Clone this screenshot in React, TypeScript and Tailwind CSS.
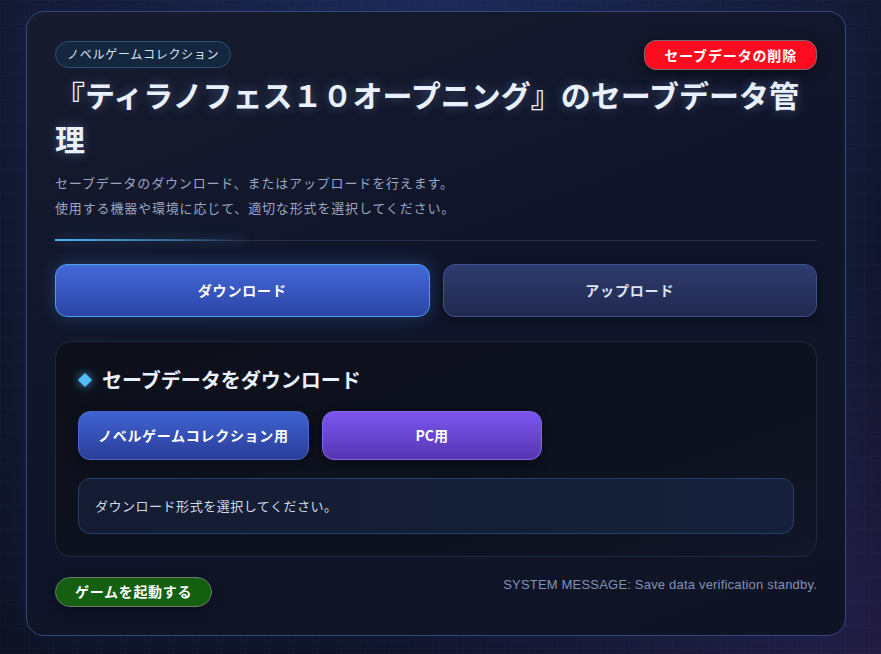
import React, { useState } from "react";

const jp = { fontFamily: '"Noto Sans CJK JP", "Noto Sans", sans-serif' };

export default function App() {
  const [tab, setTab] = useState<"download" | "upload">("download");

  return (
    <div
      className="relative min-h-[654px] w-full overflow-hidden bg-[#111629] pl-[26px] pt-[11px] pb-[19px]"
      style={jp}
    >
      {/* backdrop glow + grid */}
      <div className="pointer-events-none absolute inset-0 bg-[radial-gradient(ellipse_at_50%_-10%,#1e2a58_0%,transparent_55%),radial-gradient(ellipse_at_105%_100%,#241d45_0%,transparent_45%),linear-gradient(180deg,#141a33_0%,#0e1222_100%)]" />
      <div className="pointer-events-none absolute inset-0 bg-[linear-gradient(rgba(120,150,220,0.035)_1px,transparent_1px),linear-gradient(90deg,rgba(120,150,220,0.035)_1px,transparent_1px)] bg-[size:24px_24px]" />

      <div className="relative w-[820px] rounded-[18px] border border-[#34497a] bg-[linear-gradient(160deg,#171b2d_0%,#10152a_45%,#0f1425_100%)] px-[28px] pt-[28px] pb-[28px] shadow-[0_0_40px_rgba(30,60,140,0.25)]">
        {/* header */}
        <div className="relative">
          <span className="inline-flex h-[27px] items-center rounded-full border border-[#2c5278] bg-[#14273f] px-[11px] text-[12px] tracking-[0.06em] text-[#dbe6f5]">
            ノベルゲームコレクション
          </span>
          <button className="absolute right-0 top-0 flex h-[30px] items-center rounded-[12px] border border-[#7a6a6e] bg-[#ff0b1f] px-[19px] text-[14px] font-bold tracking-[0.06em] text-white shadow-[0_4px_14px_rgba(0,0,0,0.45)]">
            セーブデータの削除
          </button>
          <h1 className="mt-[4px] text-[30px] font-bold leading-[44px] text-[#e9f1ff] [text-shadow:0_0_12px_rgba(150,190,255,0.35)]">
            『ティラノフェス１０オープニング』のセーブデータ管理
          </h1>
          <p className="mt-[10px] text-[13px] leading-[25px] tracking-[0.065em] text-[#9aa6c4]">
            セーブデータのダウンロード、またはアップロードを行えます。
            <br />
            使用する機器や環境に応じて、適切な形式を選択してください。
          </p>
        </div>

        {/* divider */}
        <div className="relative mt-[19px] h-[2px]">
          <div className="absolute inset-x-0 top-[1px] h-px bg-[#27304a]" />
          <div className="absolute left-0 top-0 h-[2px] w-[190px] bg-[linear-gradient(90deg,#4fb4f4_0%,rgba(79,180,244,0.5)_60%,transparent_100%)] shadow-[0_0_12px_rgba(79,180,244,0.45)]" />
        </div>

        {/* tabs */}
        <div className="mt-[23px] grid grid-cols-2 gap-[13px]">
          <button
            onClick={() => setTab("download")}
            className={`h-[53px] rounded-[12px] border text-[14px] font-bold tracking-[0.06em] ${
              tab === "download"
                ? "border-[#4aa2ea] bg-[linear-gradient(180deg,#4369d8_0%,#2c44a6_100%)] text-white shadow-[0_0_18px_rgba(70,140,240,0.3)]"
                : "border-[#3d5190] bg-[linear-gradient(180deg,#2e3b6e_0%,#212950_100%)] text-[#dde5f7] shadow-[0_4px_12px_rgba(0,0,0,0.35)]"
            }`}
          >
            ダウンロード
          </button>
          <button
            onClick={() => setTab("upload")}
            className={`h-[53px] rounded-[12px] border text-[14px] font-bold tracking-[0.06em] ${
              tab === "upload"
                ? "border-[#4aa2ea] bg-[linear-gradient(180deg,#4369d8_0%,#2c44a6_100%)] text-white shadow-[0_0_18px_rgba(70,140,240,0.3)]"
                : "border-[#3d5190] bg-[linear-gradient(180deg,#2e3b6e_0%,#212950_100%)] text-[#dde5f7] shadow-[0_4px_12px_rgba(0,0,0,0.35)]"
            }`}
          >
            アップロード
          </button>
        </div>

        {/* panel */}
        <div className="mt-[24px] rounded-[16px] border border-[#1e2942] bg-[linear-gradient(160deg,#0d101b_0%,#0e121f_70%,#121729_100%)] px-[22px] pt-[24px] pb-[22px]">
          <div className="flex items-center gap-[12px]">
            <span className="ml-[2px] h-[10px] w-[10px] rotate-45 bg-[#52bdf9] shadow-[0_0_8px_rgba(82,189,249,0.8)]" />
            <h2 className="text-[20px] font-bold leading-[28px] text-[#e9f1ff]">
              セーブデータをダウンロード
            </h2>
          </div>

          <div className="mt-[17px] flex gap-[13px]">
            <button className="h-[49px] rounded-[12px] border border-[#4a67c8] bg-[linear-gradient(180deg,#3f63d0_0%,#2a3d9a_100%)] px-[19px] text-[14px] font-bold tracking-[0.05em] text-white shadow-[0_4px_12px_rgba(0,0,0,0.35)]">
              ノベルゲームコレクション用
            </button>
            <button className="h-[49px] w-[220px] rounded-[12px] border border-[#8567ee] bg-[linear-gradient(180deg,#7b56ef_0%,#5636b2_100%)] text-[14px] font-bold text-white shadow-[0_4px_12px_rgba(0,0,0,0.35)]">
              PC用
            </button>
          </div>

          <div className="mt-[18px] flex h-[56px] items-center rounded-[12px] border border-[#253e66] bg-[linear-gradient(90deg,#141c33_0%,#16203a_100%)] px-[16px] text-[13px] tracking-[0.04em] text-[#d2dbea]">
            ダウンロード形式を選択してください。
          </div>
        </div>

        {/* footer */}
        <div className="mt-[20px] flex items-start justify-between">
          <button className="h-[30px] rounded-full border border-[#687a68] bg-[#146010] px-[19px] text-[14px] font-bold tracking-[0.05em] text-white shadow-[0_4px_12px_rgba(0,0,0,0.4)]">
            ゲームを起動する
          </button>
          <span
            className="mt-[-2px] text-[13px] tracking-[0.015em] text-[#8391b6]"
            style={{ fontFamily: '"Liberation Sans", Arial, sans-serif' }}
          >
            SYSTEM MESSAGE: Save data verification standby.
          </span>
        </div>
      </div>
    </div>
  );
}
